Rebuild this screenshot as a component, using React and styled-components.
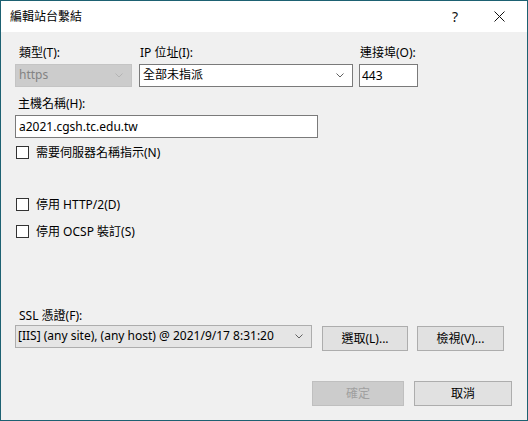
import React from "react";
import styled, { createGlobalStyle } from "styled-components";

const GlobalStyle = createGlobalStyle`
  html, body { margin: 0; padding: 0; background: #ffffff; }
  * { box-sizing: border-box; }
  body {
    font-family: "Noto Sans", "Noto Sans CJK TC", sans-serif;
    font-size: 12px;
    color: #000;
  }
`;

const Window = styled.div`
  width: 528px;
  height: 421px;
  border: 1px solid #1d6172;
  background: #f0f0f0;
  display: flex;
  flex-direction: column;
`;

const TitleBar = styled.div`
  height: 31px;
  flex: none;
  background: #ffffff;
  display: flex;
  align-items: center;
  padding: 0 6px 0 9px;
`;

const Title = styled.div`
  flex: 1;
  font-size: 12px;
  line-height: 16px;
  padding-top: 1px;
`;

const TitleButton = styled.div`
  width: 44px;
  height: 31px;
  display: flex;
  align-items: center;
  justify-content: center;
  font-size: 14px;
  color: #111;
`;

const Body = styled.div`
  flex: 1;
  display: flex;
  flex-direction: column;
  padding: 13px 15px 14px 14px;
`;

const Row = styled.div`
  display: flex;
  align-items: flex-start;
  gap: ${(p) => p.$gap || 0}px;
  margin-top: ${(p) => p.$mt || 0}px;
`;

const Field = styled.div`
  display: flex;
  flex-direction: column;
  gap: ${(p) => (p.$gap != null ? p.$gap : 3)}px;
  width: ${(p) => (p.$w ? `${p.$w}px` : "auto")};
  margin-top: ${(p) => p.$mt || 0}px;
  margin-left: ${(p) => p.$ml || 0}px;
`;

const Label = styled.div`
  line-height: 16px;
  height: 16px;
  padding-left: ${(p) => p.$pl ?? 3}px;
  white-space: nowrap;
`;

const Combo = styled.div`
  height: ${(p) => p.$h || 23}px;
  width: ${(p) => (p.$w ? `${p.$w}px` : "100%")};
  display: flex;
  align-items: center;
  padding: 0 8px 0 ${(p) => p.$pl ?? 3}px;
  border: 1px solid
    ${(p) =>
      p.$variant === "disabled" ? "#c4c4c4" : p.$variant === "list" ? "#adadad" : "#7a7a7a"};
  background: ${(p) =>
    p.$variant === "disabled" ? "#cccccc" : p.$variant === "list" ? "#e5e5e5" : "#ffffff"};
  color: ${(p) => (p.$variant === "disabled" ? "#838383" : "#000")};
  white-space: nowrap;
`;

const ComboText = styled.span`
  flex: 1;
  line-height: 16px;
  padding-bottom: 1px;
`;

const TextBox = styled.div`
  height: 23px;
  width: ${(p) => p.$w}px;
  border: 1px solid #7a7a7a;
  background: #fff;
  display: flex;
  align-items: center;
  padding-left: ${(p) => p.$pl ?? 3}px;
  line-height: 16px;
`;

const CheckRow = styled.label`
  display: flex;
  align-items: center;
  height: 16px;
  gap: 7px;
  padding-left: 1px;
  margin-top: ${(p) => p.$mt || 0}px;
`;

const Box = styled.span`
  width: 13px;
  height: 13px;
  border: 1px solid #333333;
  background: #ffffff;
  flex: none;
`;

const Spacer = styled.div`
  flex: 1;
`;

const Button = styled.div`
  width: ${(p) => p.$w}px;
  height: 25px;
  margin-top: ${(p) => p.$mt || 0}px;
  margin-left: ${(p) => p.$ml || 0}px;
  display: flex;
  align-items: center;
  justify-content: center;
  border: 1px solid ${(p) => (p.$disabled ? "#bfbfbf" : "#adadad")};
  background: ${(p) => (p.$disabled ? "#cccccc" : "#e1e1e1")};
  color: ${(p) => (p.$disabled ? "#a0a0a0" : "#000")};
  line-height: 16px;
`;

const Footer = styled.div`
  display: flex;
  justify-content: flex-end;
  gap: 10px;
  margin-top: 30px;
`;

const Chevron = ({ color = "#606060" }) => (
  <svg width="8" height="5" viewBox="0 0 8 5">
    <polyline points="0.5,0.5 4,4 7.5,0.5" fill="none" stroke={color} strokeWidth="1" />
  </svg>
);

export default function App() {
  return (
    <>
      <GlobalStyle />
      <Window>
        <TitleBar>
          <Title>編輯站台繫結</Title>
          <TitleButton>?</TitleButton>
          <TitleButton>
            <svg width="11" height="11" viewBox="0 0 11 11">
              <path d="M0.5 0.5 L10.5 10.5 M10.5 0.5 L0.5 10.5" stroke="#111" strokeWidth="1" />
            </svg>
          </TitleButton>
        </TitleBar>
        <Body>
          <Row>
            <Field $w={117}>
              <Label $pl={4}>類型(T):</Label>
              <Combo $variant="disabled">
                <ComboText>https</ComboText>
                <Chevron color="#b4b4b4" />
              </Combo>
            </Field>
            <Field $w={214} $ml={7}>
              <Label $pl={1}>IP 位址(I):</Label>
              <Combo>
                <ComboText>全部未指派</ComboText>
                <Chevron />
              </Combo>
            </Field>
            <Field $w={59} $ml={6}>
              <Label $pl={1}>連接埠(O):</Label>
              <TextBox $w={59} $pl={2}>443</TextBox>
            </Field>
          </Row>
          <Field $mt={9}>
            <Label>主機名稱(H):</Label>
            <TextBox $w={303}>a2021.cgsh.tc.edu.tw</TextBox>
          </Field>
          <CheckRow $mt={6}>
            <Box />
            需要伺服器名稱指示(N)
          </CheckRow>
          <CheckRow $mt={36}>
            <Box />
            停用 HTTP/2(D)
          </CheckRow>
          <CheckRow $mt={11}>
            <Box />
            停用 OCSP 裝訂(S)
          </CheckRow>
          <Spacer />
          <Field $gap={1}>
            <Label $pl={4}>SSL 憑證(F):</Label>
            <Row $gap={9}>
              <Combo $variant="list" $w={297} $pl={2}>
                <ComboText>[IIS] (any site), (any host) @ 2021/9/17 8:31:20</ComboText>
                <Chevron />
              </Combo>
              <Button $w={86} $mt={1} $ml={1}>選取(L)...</Button>
              <Button $w={87} $mt={1}>檢視(V)...</Button>
            </Row>
          </Field>
          <Footer>
            <Button $w={92} $disabled>確定</Button>
            <Button $w={98}>取消</Button>
          </Footer>
        </Body>
      </Window>
    </>
  );
}
